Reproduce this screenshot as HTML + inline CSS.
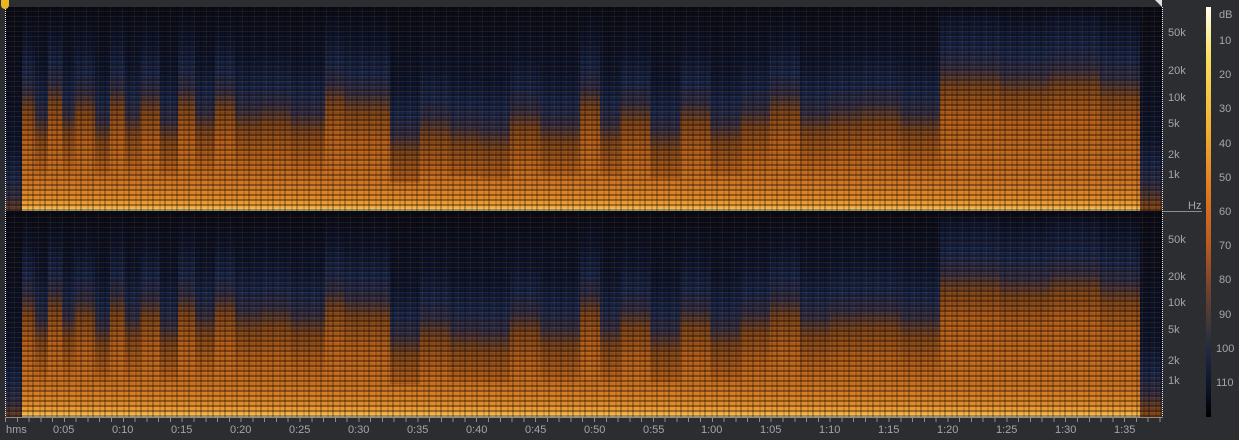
<!DOCTYPE html>
<html><head><meta charset="utf-8"><style>
html,body{margin:0;padding:0;background:#2b2d31;width:1239px;height:440px;overflow:hidden;font-family:"Liberation Sans",sans-serif;}
.ch{position:absolute;left:5px;width:1157px;overflow:hidden;background:#0a1226}
.s{position:absolute;top:0;bottom:0;background:linear-gradient(to bottom,#050a18 0%,#091430 calc(var(--t) - 28%),#14254c calc(var(--t) - 14%),#2e2c44 calc(var(--t) - 4%),#7a4218 calc(var(--t) + 6%),#b05c18 calc(var(--t) + 20%),#c87020 84%,#e08a28 94%,#f4b040 98.5%,#fff0a0 100%)}
.tex{position:absolute;inset:0;background:repeating-linear-gradient(to bottom,rgba(0,0,0,0) 0 2px,rgba(30,10,0,.38) 2px 4px,rgba(255,190,90,.08) 4px 5px),repeating-linear-gradient(to right,rgba(0,0,0,0) 0 3px,rgba(0,0,10,.25) 3px 5px,rgba(0,0,0,0) 5px 9px,rgba(255,200,120,.07) 9px 10px,rgba(0,0,0,.15) 10px 12px)}
.lbl{position:absolute;color:#a3a6ab;font-size:11px;line-height:12px}
</style></head><body>

<div class="ch" style="top:7px;height:204px">
<div class="s" style="left:0;width:17px;--t:97%"></div>
<div class="s" style="left:17px;width:13px;--t:45%"></div>
<div class="s" style="left:30px;width:13px;--t:58%"></div>
<div class="s" style="left:43px;width:14px;--t:42%"></div>
<div class="s" style="left:57px;width:13px;--t:56%"></div>
<div class="s" style="left:70px;width:20px;--t:46%"></div>
<div class="s" style="left:90px;width:15px;--t:60%"></div>
<div class="s" style="left:105px;width:15px;--t:44%"></div>
<div class="s" style="left:120px;width:15px;--t:57%"></div>
<div class="s" style="left:135px;width:20px;--t:46%"></div>
<div class="s" style="left:155px;width:18px;--t:60%"></div>
<div class="s" style="left:173px;width:17px;--t:44%"></div>
<div class="s" style="left:190px;width:20px;--t:56%"></div>
<div class="s" style="left:210px;width:20px;--t:45%"></div>
<div class="s" style="left:230px;width:25px;--t:54%"></div>
<div class="s" style="left:255px;width:30px;--t:52%"></div>
<div class="s" style="left:285px;width:35px;--t:56%"></div>
<div class="s" style="left:320px;width:20px;--t:42%"></div>
<div class="s" style="left:340px;width:45px;--t:46%"></div>
<div class="s" style="left:385px;width:30px;--t:66%"></div>
<div class="s" style="left:415px;width:30px;--t:58%"></div>
<div class="s" style="left:445px;width:30px;--t:62%"></div>
<div class="s" style="left:475px;width:30px;--t:64%"></div>
<div class="s" style="left:505px;width:30px;--t:54%"></div>
<div class="s" style="left:535px;width:40px;--t:61%"></div>
<div class="s" style="left:575px;width:20px;--t:44%"></div>
<div class="s" style="left:595px;width:20px;--t:61%"></div>
<div class="s" style="left:615px;width:30px;--t:51%"></div>
<div class="s" style="left:645px;width:30px;--t:64%"></div>
<div class="s" style="left:675px;width:30px;--t:51%"></div>
<div class="s" style="left:705px;width:30px;--t:61%"></div>
<div class="s" style="left:735px;width:30px;--t:54%"></div>
<div class="s" style="left:765px;width:30px;--t:46%"></div>
<div class="s" style="left:795px;width:30px;--t:56%"></div>
<div class="s" style="left:825px;width:30px;--t:53%"></div>
<div class="s" style="left:855px;width:40px;--t:51%"></div>
<div class="s" style="left:895px;width:40px;--t:56%"></div>
<div class="s" style="left:935px;width:60px;--t:34%"></div>
<div class="s" style="left:995px;width:50px;--t:37%"></div>
<div class="s" style="left:1045px;width:50px;--t:34%"></div>
<div class="s" style="left:1095px;width:40px;--t:39%"></div>
<div class="s" style="left:1135px;width:22px;--t:92%"></div>
<div class="tex"></div>
</div>

<div class="ch" style="top:213px;height:204px">
<div class="s" style="left:0;width:17px;--t:97%"></div>
<div class="s" style="left:17px;width:13px;--t:44%"></div>
<div class="s" style="left:30px;width:13px;--t:57%"></div>
<div class="s" style="left:43px;width:14px;--t:42%"></div>
<div class="s" style="left:57px;width:13px;--t:55%"></div>
<div class="s" style="left:70px;width:20px;--t:46%"></div>
<div class="s" style="left:90px;width:15px;--t:59%"></div>
<div class="s" style="left:105px;width:15px;--t:44%"></div>
<div class="s" style="left:120px;width:15px;--t:56%"></div>
<div class="s" style="left:135px;width:20px;--t:46%"></div>
<div class="s" style="left:155px;width:18px;--t:59%"></div>
<div class="s" style="left:173px;width:17px;--t:44%"></div>
<div class="s" style="left:190px;width:20px;--t:54%"></div>
<div class="s" style="left:210px;width:20px;--t:44%"></div>
<div class="s" style="left:230px;width:25px;--t:52%"></div>
<div class="s" style="left:255px;width:30px;--t:50%"></div>
<div class="s" style="left:285px;width:35px;--t:54%"></div>
<div class="s" style="left:320px;width:20px;--t:42%"></div>
<div class="s" style="left:340px;width:45px;--t:46%"></div>
<div class="s" style="left:385px;width:30px;--t:64%"></div>
<div class="s" style="left:415px;width:30px;--t:56%"></div>
<div class="s" style="left:445px;width:30px;--t:61%"></div>
<div class="s" style="left:475px;width:30px;--t:62%"></div>
<div class="s" style="left:505px;width:30px;--t:53%"></div>
<div class="s" style="left:535px;width:40px;--t:60%"></div>
<div class="s" style="left:575px;width:20px;--t:44%"></div>
<div class="s" style="left:595px;width:20px;--t:60%"></div>
<div class="s" style="left:615px;width:30px;--t:51%"></div>
<div class="s" style="left:645px;width:30px;--t:62%"></div>
<div class="s" style="left:675px;width:30px;--t:51%"></div>
<div class="s" style="left:705px;width:30px;--t:60%"></div>
<div class="s" style="left:735px;width:30px;--t:53%"></div>
<div class="s" style="left:765px;width:30px;--t:46%"></div>
<div class="s" style="left:795px;width:30px;--t:55%"></div>
<div class="s" style="left:825px;width:30px;--t:52%"></div>
<div class="s" style="left:855px;width:40px;--t:51%"></div>
<div class="s" style="left:895px;width:40px;--t:55%"></div>
<div class="s" style="left:935px;width:60px;--t:33%"></div>
<div class="s" style="left:995px;width:50px;--t:36%"></div>
<div class="s" style="left:1045px;width:50px;--t:33%"></div>
<div class="s" style="left:1095px;width:40px;--t:38%"></div>
<div class="s" style="left:1135px;width:22px;--t:92%"></div>
<div class="tex"></div>
</div>

<div style="position:absolute;left:5px;top:211px;width:1157px;height:2px;background:#0a0d18"></div>
<div style="position:absolute;left:1162px;top:211px;width:40px;height:1px;background:#8a8d92"></div>
<div style="position:absolute;left:5px;top:7px;width:0;height:411px;border-left:1px dotted #e8e8e8"></div>
<div style="position:absolute;left:1162px;top:7px;width:0;height:411px;border-left:1px dotted #e8e8e8"></div>
<div style="position:absolute;left:5px;top:417px;width:1158px;height:1px;background:#8a8d92"></div>
<div style="position:absolute;left:1px;top:0;width:8px;height:9px;background:#e8b820;border-radius:0 0 4px 4px"></div>
<div style="position:absolute;left:1155px;top:0;width:0;height:0;border-left:7px solid transparent;border-top:7px solid #ddd"></div>

<div class="lbl" style="left:6px;top:424px">hms</div>
<div class="lbl" style="left:53px;top:424px">0:05</div>
<div class="lbl" style="left:112px;top:424px">0:10</div>
<div class="lbl" style="left:171px;top:424px">0:15</div>
<div class="lbl" style="left:230px;top:424px">0:20</div>
<div class="lbl" style="left:289px;top:424px">0:25</div>
<div class="lbl" style="left:348px;top:424px">0:30</div>
<div class="lbl" style="left:407px;top:424px">0:35</div>
<div class="lbl" style="left:466px;top:424px">0:40</div>
<div class="lbl" style="left:525px;top:424px">0:45</div>
<div class="lbl" style="left:584px;top:424px">0:50</div>
<div class="lbl" style="left:643px;top:424px">0:55</div>
<div class="lbl" style="left:701px;top:424px">1:00</div>
<div class="lbl" style="left:760px;top:424px">1:05</div>
<div class="lbl" style="left:819px;top:424px">1:10</div>
<div class="lbl" style="left:878px;top:424px">1:15</div>
<div class="lbl" style="left:937px;top:424px">1:20</div>
<div class="lbl" style="left:996px;top:424px">1:25</div>
<div class="lbl" style="left:1055px;top:424px">1:30</div>
<div class="lbl" style="left:1114px;top:424px">1:35</div>
<div style="position:absolute;left:5px;top:418px;width:1158px;height:4px;background:repeating-linear-gradient(to right,#8a8d92 0 1px,transparent 1px 11.78px)"></div>

<div class="lbl" style="left:1168px;top:27px">50k</div>
<div class="lbl" style="left:1168px;top:65px">20k</div>
<div class="lbl" style="left:1168px;top:92px">10k</div>
<div class="lbl" style="left:1168px;top:118px">5k</div>
<div class="lbl" style="left:1168px;top:149px">2k</div>
<div class="lbl" style="left:1168px;top:169px">1k</div>
<div class="lbl" style="left:1188px;top:200px">Hz</div>
<div class="lbl" style="left:1168px;top:234px">50k</div>
<div class="lbl" style="left:1168px;top:271px">20k</div>
<div class="lbl" style="left:1168px;top:297px">10k</div>
<div class="lbl" style="left:1168px;top:324px">5k</div>
<div class="lbl" style="left:1168px;top:355px">2k</div>
<div class="lbl" style="left:1168px;top:375px">1k</div>

<div style="position:absolute;left:1206px;top:7px;width:5px;height:410px;background:linear-gradient(to bottom,#fffff0 0%,#f8e060 12%,#f0b030 30%,#e07820 45%,#b85a20 58%,#6a4030 70%,#3a3838 78%,#1e2640 85%,#0c1428 93%,#000 100%)"></div>
<div class="lbl" style="left:1219px;top:9px">dB</div>
<div class="lbl" style="left:1219px;top:35px">10</div>
<div class="lbl" style="left:1219px;top:69px">20</div>
<div class="lbl" style="left:1219px;top:103px">30</div>
<div class="lbl" style="left:1219px;top:138px">40</div>
<div class="lbl" style="left:1219px;top:172px">50</div>
<div class="lbl" style="left:1219px;top:206px">60</div>
<div class="lbl" style="left:1219px;top:240px">70</div>
<div class="lbl" style="left:1219px;top:274px">80</div>
<div class="lbl" style="left:1219px;top:309px">90</div>
<div class="lbl" style="left:1216px;top:343px">100</div>
<div class="lbl" style="left:1216px;top:377px">110</div>
</body></html>
